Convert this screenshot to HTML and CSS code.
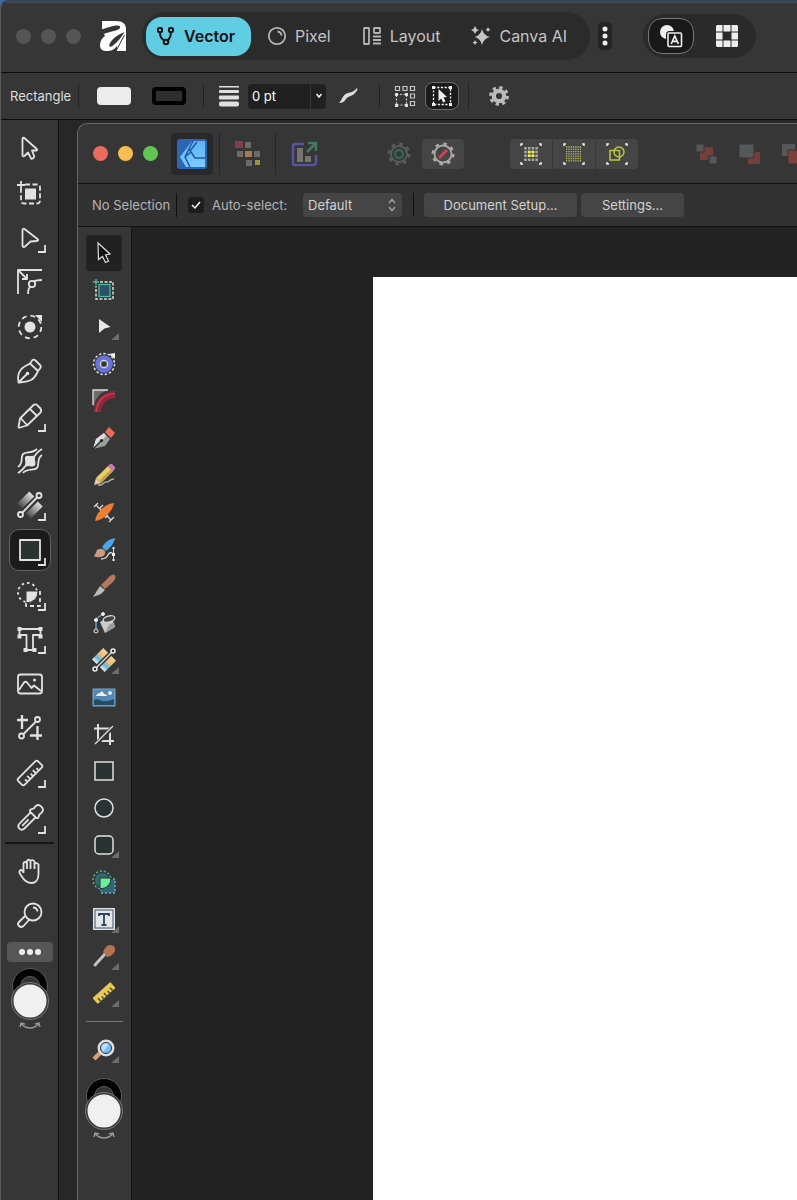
FILE: index.html
```
<!DOCTYPE html>
<html lang="en">
	<head>
		<meta charset="utf-8" />
		<meta name="viewport" content="width=device-width, initial-scale=1">
		<title>Vector</title>
		<link rel="stylesheet" href="styles.css">
	</head>
	<body>
		<div class="app">
			<!-- title bar -->
			<header class="titlebar">
				<div class="dots"><i></i><i></i><i></i></div>
				<svg class="logo" width="26" height="30" viewBox="0 0 26 30">
					<path fill="#fff" d="M2 0H16C23 0 26 3 26 8V30H17V25C14 29 11 30 7 30C2 30 0 28 0 24C0 20 2 17 5 15L2 9Z"/>
					<path fill="#363636" d="M1 8.500C7 7 13 4.500 17 4.500C21.500 4.500 21 7.500 17 9C12 11 5 11 0 16Z"/>
					<path fill="#363636" d="M24.500 11C17 14 12 18 9.500 23C8.500 26 10.500 26.500 13 24.500C18 20.500 21.500 16 24.500 11Z"/>
					<path fill="none" stroke="#363636" stroke-width="1" d="M24.500 14L16.500 29"/>
				</svg>
				<nav class="modes">
					<button class="mode current" type="button">
						<svg width="20" height="20" viewBox="0 0 20 20" fill="none" stroke="#111" stroke-width="2">
							<rect x="2" y="2" width="4" height="4" rx="1"/><rect x="13" y="2" width="4" height="4" rx="1"/><circle cx="10" cy="16" r="2.300"/><path d="M4 6C4 11 5 12 8 14.500M15 6C15 11 14 12 12 14.500"/>
						</svg>
						Vector
					</button>
					<button class="mode" type="button">
						<svg width="20" height="20" viewBox="0 0 20 20" fill="none" stroke="#b4b4b4" stroke-width="1.800">
							<circle cx="10" cy="10" r="8.200"/><path d="M10.500 5.500A4.500 4.500 0 0 1 14.500 9.500"/>
						</svg>
						Pixel
					</button>
					<button class="mode" type="button">
						<svg width="20" height="20" viewBox="0 0 20 20" fill="none" stroke="#b4b4b4" stroke-width="1.800">
							<rect x="2" y="2" width="5" height="16" rx="0.500"/><rect x="12" y="2" width="6" height="5" rx="0.500"/><path d="M11 10.500H19M11 14H19M11 17.500H19"/>
						</svg>
						Layout
					</button>
					<button class="mode" type="button">
						<svg width="20" height="20" viewBox="0 0 20 20" fill="#c4c4c4">
							<path d="M11 3Q12.500 9.500 19 11Q12.500 12.500 11 19Q9.500 12.500 3.500 11Q9.500 9.500 11 3ZM4 0Q4.800 3.200 8 4Q4.800 4.800 4 8Q3.200 4.800 0 4Q3.200 3.200 4 0ZM17 1Q17.500 3 19.500 3.500Q17.500 4 17 6Q16.500 4 14.500 3.500Q16.500 3 17 1ZM4 14Q4.500 16 6.500 16.500Q4.500 17 4 19Q3.500 17 1.500 16.500Q3.500 16 4 14Z"/>
						</svg>
						Canva AI
					</button>
				</nav>
				<button class="more-modes" type="button" aria-label="More">
					<svg width="6" height="22" viewBox="0 0 6 22" fill="#eee"><circle cx="3" cy="4" r="2.500"/><circle cx="3" cy="11" r="2.500"/><circle cx="3" cy="18" r="2.500"/></svg>
				</button>
				<div class="views">
					<button class="view current" type="button" aria-label="Assets">
						<svg width="24" height="24" viewBox="0 0 24 24">
							<circle cx="8" cy="8" r="7" fill="#eee"/><rect x="9" y="9" width="14" height="14" rx="1.500" fill="#1a1a1a" stroke="#1a1a1a" stroke-width="4"/><rect x="9" y="9" width="13.500" height="13.500" rx="1" fill="#1a1a1a" stroke="#eee" stroke-width="1.600"/><path d="M12.200 20L15.800 12L19.400 20M13.600 17.400H18" fill="none" stroke="#eee" stroke-width="1.700"/>
						</svg>
					</button>
					<button class="view" type="button" aria-label="Panels">
						<svg width="22" height="22" viewBox="0 0 22 22" fill="#eee"><path d="M1 0H6.500V6.500H0V1ZM7.500 0H14.500V6.500H7.500ZM15.500 0H21L22 1V6.500H15.500ZM0 7.500H6.500V14.500H0ZM15.500 7.500H22V14.500H15.500ZM0 15.500H6.500V22H1L0 21ZM7.500 15.500H14.500V22H7.500ZM15.500 15.500H22V21L21 22H15.500Z"/></svg>
					</button>
				</div>
			</header>

			<!-- context bar -->
			<div class="context">
				<span class="tool-name">Rectangle</span>
				<button class="fill-swatch" type="button" aria-label="Fill"></button>
				<button class="stroke-swatch" type="button" aria-label="Stroke"></button>
				<div class="stroke-box">
					<svg width="20" height="22" viewBox="0 0 20 22" fill="#e0e0e0"><rect y="1" width="20" height="1.500"/><rect y="5" width="20" height="3" rx="1"/><rect y="10.500" width="20" height="4" rx="1"/><rect y="16.500" width="20" height="5" rx="2"/></svg>
					<input type="text" value="0 pt" aria-label="Stroke width"><button class="caret" type="button" aria-label="Stroke widths"><svg width="8" height="6" viewBox="0 0 8 6" fill="none" stroke="#eee" stroke-width="1.600"><path d="M1.500 1L4 4L6.500 1"/></svg></button>
					<svg width="20" height="18" viewBox="0 0 20 18" fill="#ddd"><path d="M0 16C4 12 3 8 9 6C14 5 15 4 18 1C19 2 18 4 16 6C13 10 10 8 7 12C5 15 3 16 0 16Z"/></svg>
				</div>
				<div class="select-box">
					<button class="small" type="button" aria-label="Transform objects separately">
						<svg width="22" height="22" viewBox="0 0 22 22" fill="none" stroke="#c8c8c8" stroke-width="1.200">
							<path d="M1.500 1.500H5.500V5.500H1.500ZM9 1.500H13V5.500H9ZM16.500 1.500H20.500V5.500H16.500ZM16.500 9H20.500V13H16.500ZM16.500 16.500H20.500V20.500H16.500Z"/><path stroke-dasharray="2 1.500" d="M2.500 9.500H12.500V20H2.500Z"/><path fill="#ddd" stroke="none" d="M1 8H4V11H1ZM11 8H14V11H11ZM1 19H4V22H1ZM11 19H14V22H11Z"/>
						</svg>
					</button>
					<button class="small current" type="button" aria-label="Edit all layers">
						<svg width="20" height="20" viewBox="0 0 20 20">
							<rect x="1.500" y="1.500" width="17" height="17" fill="none" stroke="#eee" stroke-width="1.300" stroke-dasharray="2.200 1.500"/><path fill="#eee" d="M0 0H3V3H0ZM17 0H20V3H17ZM0 17H3V20H0ZM17 17H20V20H17ZM6.500 3L15 11L11.500 11.500L13.500 15.500L11 16.500L9.300 12.500L6.500 15Z"/>
						</svg>
					</button>
				</div>
				<button class="small" type="button" aria-label="Options">
					<svg width="20" height="20" viewBox="0 0 20 20"><circle cx="10" cy="10" r="8.300" fill="none" stroke="#bababa" stroke-width="3.200" stroke-dasharray="3.260 3.260"/><circle cx="10" cy="10" r="5.200" fill="none" stroke="#bababa" stroke-width="4.200"/></svg>
				</button>
			</div>

			<div class="workspace">
				<!-- tools of the back window -->
				<aside class="tools">
					<div class="tool-list">
						<button type="button" aria-label="Move"><svg class="line" viewBox="0 0 32 32"><path d="M10 5.800L22.800 17Q24 18.500 22 18.500H18L20.300 24.500Q19.500 27 17.300 26.800L14 20.500L10.500 24Q8.500 25 8.500 23V7Q8.700 5 10 5.800Z"/></svg></button>
						<button type="button" aria-label="Artboard"><svg class="line" viewBox="0 0 32 32"><path stroke-dasharray="5 2.500" d="M11 7.500H23Q26 7.500 26 10.500V23.500Q26 26.500 23 26.500H10Q7 26.500 7 23.500V12"/><rect class="solid" x="11" y="11.500" width="11" height="11"/><path d="M7 4V12M3 8H11"/></svg></button>
						<button type="button" aria-label="Node"><svg class="line" viewBox="0 0 32 32"><path d="M10.500 7L23.500 17Q25 18.500 23 19L16.500 19.500L11 24.500Q9 26 8.500 23.500V8Q9 6 10.500 7Z"/><path class="corner" d="M31 23V30H24"/></svg></button>
						<button type="button" aria-label="Corner"><svg class="line" viewBox="0 0 32 32"><path d="M28 4H4V28M5 5L13 13M13 8V13H8M14 28C14 24 14.500 22 16.500 20.500M20 15.500C22 14 24 14 28 14"/><circle cx="18" cy="18" r="3.200"/></svg></button>
						<button type="button" aria-label="Point transform"><svg class="line" viewBox="0 0 32 32"><circle class="solid" cx="16" cy="16" r="5.500"/><circle cx="16" cy="16" r="11.300" stroke-dasharray="5 3.880"/><path class="solid" d="M21 4H28V11Z"/></svg></button>
						<button type="button" aria-label="Pen"><svg class="line" viewBox="0 0 32 32"><path d="M4.500 27.500C3.500 22 4 19 6 16C8 12 12 11 16 8.500L24 16C22 20 21 23 17 25C13 27 9 27 4.500 27.500ZM16 8.500L18.500 5Q20 4 21.500 5.500L26.500 10.500Q27.500 12 26 13.500L24 16M4.500 27.500L13 19"/><circle class="solid" cx="13.500" cy="18.500" r="1.800"/></svg></button>
						<button type="button" aria-label="Pencil"><svg class="line" viewBox="0 0 32 32"><path d="M4.500 27L6 18.500L19.500 5Q21.500 3.500 23.500 5.500L26.500 8.500Q28 10.500 26.500 12.500L13 25.500L6 27.500Q4.500 28 4.500 27ZM6.500 18L13 25M16 9L22.500 15.500"/><path class="corner" d="M31 24V31H24"/></svg></button>
						<button type="button" aria-label="Warp"><svg class="line" viewBox="0 0 32 32"><path class="solid" d="M11 12Q13 10 16 11Q20 11 22 9.500Q20 14 21.500 17Q22 20 20 21Q18 22 15 21Q12 21 10 23Q12 18 11 15Z"/><path d="M4 28C8 25 10 24 11 21M21 11C22 8 25 6 28 4M4 22C10 18 6 13 9 9C12 6 18 9 23 4M9 28C13 23 20 26 23 23C26 19 22 14 28 10"/></svg></button>
						<button type="button" aria-label="Gradient"><svg class="line" viewBox="0 0 32 32"><defs><linearGradient id="fade"><stop stop-color="#eee" stop-opacity=".1"/><stop offset="1" stop-color="#ddd"/></linearGradient></defs><g transform="rotate(-45 16 16)" stroke="none" fill="url(#fade)"><rect x="8" y="6" width="17" height="7"/><rect x="7" y="19" width="17" height="7"/></g><path d="M8.500 23.500L23 8.500"/><circle cx="6.500" cy="25.500" r="2.500"/><circle cx="25" cy="6.500" r="2.500"/><path class="corner" d="M31 24V31H24"/></svg></button>
						<button class="current" type="button" aria-label="Rectangle"><svg class="line" viewBox="0 0 32 32"><rect x="6" y="6" width="20" height="20" fill="#2a3232"/><path class="corner" d="M31 24V31H24"/></svg></button>
						<button type="button" aria-label="Shape builder"><svg class="line" viewBox="0 0 32 32"><circle cx="13.500" cy="13.500" r="9.500" stroke-dasharray="2.500 3"/><path d="M26 12V27H12V23" stroke-dasharray="4 3"/><path class="knock" d="M12 12H24Q24 23 12 24Z"/><path class="corner" d="M31 24V31H24"/></svg></button>
						<button type="button" aria-label="Text"><svg class="line" viewBox="0 0 32 32"><path d="M5.500 6H26.500V12H19V27H12.500V12H5.500Z"/><path class="solid" d="M3.500 4H7.500V8H3.500ZM24.500 4H28.500V8H24.500ZM3.500 11.500H7.500V15.500H3.500ZM24.500 11.500H28.500V15.500H24.500ZM9.500 25H13.500V29H9.500ZM18.500 25H22.500V29H18.500Z"/><path class="corner" d="M31 23V30H24"/></svg></button>
						<button type="button" aria-label="Place image"><svg class="line" viewBox="0 0 32 32"><rect x="4" y="6.500" width="24" height="19" rx="2.500"/><path d="M5 22L10 14.500Q11.500 13 13 14.500L17.500 20L20 17.500L27 23"/><circle class="solid" cx="20.500" cy="12" r="1.500"/></svg></button>
						<button type="button" aria-label="Vector crop"><svg class="line" viewBox="0 0 32 32"><path stroke-width="2.300" d="M8 3V17M3 8H14M23.500 14V28M16 23.500H28"/><path d="M9.500 22L21.500 10"/><circle cx="7.500" cy="24" r="2.500"/><circle cx="23.500" cy="7.500" r="2.500"/></svg></button>
						<button type="button" aria-label="Measure"><svg class="line" viewBox="0 0 32 32"><g transform="rotate(-45 16 16)"><rect x="2" y="11.500" width="28" height="9" rx="2"/><path d="M8 20V17M12 20V16M16 20V17M20 20V16M24 20V17"/></g><path class="corner" d="M31 23V30H24"/></svg></button>
						<button type="button" aria-label="Color picker"><svg class="line" viewBox="0 0 32 32"><g transform="rotate(45 16 16)"><path d="M11.500 11.500H20.500Q22.500 10.500 21 8.500Q19.500 7 20.500 4Q20.500 0 16 0Q11.500 0 11.500 4Q12.500 7 11 8.500Q9.500 10.500 11.500 11.500ZM12.500 12V27Q12.500 31 16 31Q19.500 31 19.500 27V12M16 18V27"/></g><path class="corner" d="M31 24V31H24"/></svg></button>
					</div>
					<div class="tool-list views-list">
						<button type="button" aria-label="Pan"><svg class="line" viewBox="0 0 32 32"><path d="M9.500 18V8Q11 6 13 8V14M13 14V6Q14.500 3.500 16.500 6V14M16.500 14V6Q18.500 4 20.500 6.500V14M20.500 14V9Q22.500 7 24.500 9.500V19C24.500 24 22 28 17.500 28C11 28 9 23 5.500 18Q5 15 7.500 15Q9 15.500 9.500 18"/></svg></button>
						<button type="button" aria-label="Zoom"><svg class="line" viewBox="0 0 32 32"><circle cx="19" cy="13" r="8.500"/><path d="M19 8.500Q23 8.500 23.500 12.500M11 17L5 23Q3 25 5 27Q7 29 9.500 27L15 21"/></svg></button>
					</div>
					<button class="more" type="button" aria-label="More tools"><i></i><i></i><i></i></button>
					<svg class="colors" width="40" height="64" viewBox="0 0 40 64"><circle cx="20" cy="19" r="17.500" fill="#000" stroke="#5c5c5c"/><circle cx="20" cy="19" r="9.500" fill="#333" stroke="#5c5c5c"/><circle cx="20" cy="34" r="17.500" fill="#f0f0f0" stroke="#3a3a3a" stroke-width="2"/><circle cx="20" cy="34" r="18.500" fill="none" stroke="#777"/><path d="M11 57Q20 65 29 57M10 60L11 56L15 57M25 57L29 56L30 60" fill="none" stroke="#999" stroke-width="1.300"/></svg>
				</aside>

				<!-- front window -->
				<section class="window">
					<div class="toolbar">
						<div class="dots color"><i></i><i></i><i></i></div>
						<div class="personas">
							<button class="persona current" type="button" aria-label="Designer"><svg width="30" height="30" viewBox="0 0 30 30"><defs><linearGradient id="sky" x2="0" y2="1"><stop stop-color="#5cb4f4"/><stop offset="1" stop-color="#7ccbff"/></linearGradient></defs><rect width="30" height="30" rx="3" fill="#2c65b5"/><path fill="url(#sky)" d="M15 2H28V28H9L3 18Z"/><path d="M16 2L8 18L13 28M12 10L18 19H28M20 3L13 12M8 18L14 13" fill="none" stroke="#2259a0" stroke-width="1.500"/></svg></button>
							<button class="persona" type="button" aria-label="Pixel persona"><svg width="26" height="26" viewBox="0 0 26 26"><path fill="#6b6b6b" d="M10 1H16V7H10ZM2 10H8V16H2ZM19 10H25V16H19ZM11 19H17V25H11Z"/><path fill="#833f49" d="M0 0H8V7H0Z"/><path fill="#a9774c" d="M10 10H17V16H10Z"/><path fill="#9a9143" d="M20 19H25V24H20Z"/></svg></button>
							<button class="persona" type="button" aria-label="Export persona"><svg width="28" height="28" viewBox="0 0 28 28" fill="none"><path d="M14 4H5Q3 4 3 6V23Q3 25 5 25H23Q26 25 26 22V15" stroke="#55559a" stroke-width="2.500"/><path fill="#777370" d="M7 8H13V22H7ZM15 16H21V22H15Z"/><path d="M17 12L25 4M18 3H26V11" stroke="#3f7b62" stroke-width="2.500"/></svg></button>
						</div>
						<button class="gear" type="button" aria-label="Defaults"><svg width="24" height="24" viewBox="0 0 24 24" fill="none"><circle cx="12" cy="12" r="8" stroke="#595c5b" stroke-width="2"/><circle cx="12" cy="12" r="10" stroke="#595c5b" stroke-width="3" stroke-dasharray="3.500 4.350"/><circle cx="12" cy="12" r="4" stroke="#376451" stroke-width="2.500"/></svg></button>
						<button class="gear raised" type="button" aria-label="Revert defaults"><svg width="24" height="24" viewBox="0 0 24 24" fill="none"><circle cx="12" cy="12" r="8.500" stroke="#aaa" stroke-width="1.800"/><circle cx="12" cy="12" r="10.300" stroke="#aaa" stroke-width="2.500" stroke-dasharray="3.500 4.590"/><path d="M8 16L16 8" stroke="#d44050" stroke-width="3"/></svg></button>
						<div class="snaps">
							<button type="button" aria-label="Force pixel alignment"><svg width="24" height="24" viewBox="0 0 24 24" fill="none"><path d="M2 4V2H4M20 2H22V4M22 20V22H20M4 22H2V20" stroke="#eee" stroke-width="1.500"/><path d="M6.500 5V19M10.200 5V19M13.900 5V19M17.600 5V19" stroke="#aaa" stroke-width="2.500" stroke-dasharray="2.500 1.300"/><path d="M10.200 8.800V15M13.900 8.800V15" stroke="#f4f43a" stroke-width="2.800" stroke-dasharray="2.500 1.300"/></svg></button>
							<button type="button" aria-label="Move by whole pixels"><svg width="24" height="24" viewBox="0 0 24 24" fill="none"><path d="M2 4V2H4M20 2H22V4M22 20V22H20M4 22H2V20" stroke="#eee" stroke-width="1.500"/><path d="M4 5H20M4 7.300H20M4 9.600H20M4 11.900H20M4 14.200H20M4 16.500H20M4 18.800H20" stroke="#b9bd5c" stroke-width="1.300" stroke-dasharray="1.300 1"/></svg></button>
							<button type="button" aria-label="Snapping"><svg width="24" height="24" viewBox="0 0 24 24" fill="none"><path d="M2 4V2H4M20 2H22V4M22 20V22H20M4 22H2V20" stroke="#eee" stroke-width="1.500"/><path d="M5 8.500H14.500V18H5Z" stroke="#b9c83a" stroke-width="1.500"/><circle cx="14" cy="10" r="5" stroke="#b9c83a" stroke-width="1.500"/></svg></button>
						</div>
						<div class="orders">
							<button type="button" aria-label="Back"><svg width="22" height="22" viewBox="0 0 22 22"><path fill="#743f3b" d="M8 4H17V13H8Z"/><path fill="#743f3b" d="M4 9H12V17H4Z"/><path fill="#555858" stroke="#363636" d="M0 1H8V9H0ZM13 13H21V21H13Z"/></svg></button>
							<button type="button" aria-label="Backward"><svg width="22" height="22" viewBox="0 0 22 22"><path fill="#743f3b" d="M9 9H21V21H9Z"/><path fill="#555858" stroke="#363636" d="M0 1H15V15H0Z"/></svg></button>
							<button type="button" aria-label="Forward"><svg width="22" height="22" viewBox="0 0 22 22"><path fill="#555858" d="M0 1H13V13H0Z"/><path fill="#7c3f3a" stroke="#363636" d="M6 7H21V21H6Z"/></svg></button>
						</div>
					</div>

					<div class="options">
						<span class="selection">No Selection</span>
						<label class="auto"><input type="checkbox" checked> Auto-select:</label>
						<span class="pick">
							<select aria-label="Auto-select mode"><option>Default</option></select>
							<svg width="8" height="14" viewBox="0 0 8 14" fill="none" stroke="#aaa" stroke-width="1.200"><path d="M1 5L4 1.500L7 5M1 9L4 12.500L7 9"/></svg>
						</span>
						<span class="setups">
							<button class="setup" type="button">Document Setup...</button>
							<button class="settings" type="button">Settings...</button>
						</span>
					</div>

					<div class="document">
						<aside class="tools-color">
							<button class="current" type="button" aria-label="Move"><svg viewBox="0 0 32 32"><path d="M10 6L22 17L17.500 18L20.500 24L17.500 25.500L14.500 19.500L10.500 22.500Z" fill="#111" stroke="#ddd" stroke-width="1.200"/></svg></button>
							<button type="button" aria-label="Artboard"><svg viewBox="0 0 32 32"><path d="M12 8H25V25H8V12" fill="none" stroke="#ddd" stroke-width="1.500" stroke-dasharray="3 1.500"/><rect x="11" y="10.500" width="11" height="12" fill="#2b5166" stroke="#4bc0a0" stroke-width="1.200"/><path d="M8 5V11M5 8H11" stroke="#4bc0a0" stroke-width="1.300"/></svg></button>
							<button type="button" aria-label="Node"><svg viewBox="0 0 32 32"><path fill="#e8e8e8" d="M11 8L22.500 16L16.500 17.500L11 22Z"/><path class="more-mark" d="M31 22V29H23Z"/></svg></button>
							<button type="button" aria-label="Point transform"><svg viewBox="0 0 32 32" fill="none"><circle cx="16" cy="16" r="10.500" stroke="#ddd" stroke-width="1.500" stroke-dasharray="2.500 1.900"/><circle cx="16" cy="16" r="6.300" stroke="#6673dd" stroke-width="5"/><circle cx="16" cy="16" r="3.700" fill="#555" stroke="#ddd" stroke-width="1.200"/><circle cx="16" cy="16" r="2" fill="#333"/><path fill="#eee" d="M21 6L27 5V11Z"/></svg></button>
							<button type="button" aria-label="Corner"><svg viewBox="0 0 32 32"><path fill="#6a6f6e" d="M5 5H20Q8 9 6 21H5Z"/><path d="M5 20V5H20" fill="none" stroke="#ddd" stroke-width="1.300"/><path fill="#96263a" d="M6 27Q7 8 27 6V13Q14 14 13 27Z"/><path d="M8 27Q10 10 27 8.500" fill="none" stroke="#c94a55" stroke-width="1.200"/></svg></button>
							<button type="button" aria-label="Pen"><svg viewBox="0 0 32 32"><path fill="#9b9d9d" d="M5 27L8 17L16 11L22 17L17 24Z"/><path fill="#ddd" d="M5 27L8 17L16 11L18 14L10 22Z"/><path d="M5 27L13 19" stroke="#222" stroke-width="1.200"/><circle cx="13.500" cy="18.500" r="1.600" fill="#222"/><path fill="#f06a5c" d="M17 10L21 5L27 11L23 16Z"/></svg></button>
							<button type="button" aria-label="Pencil"><svg viewBox="0 0 32 32"><path fill="#e8d068" d="M8 19L20 7L25 12L13 24Z"/><path fill="#c6a443" d="M11 22L23 10L25 12L13 24Z"/><path fill="#e8c9a0" d="M6 26L8 19L13 24Z"/><path fill="#c779bd" d="M20 7L22 5L24 5L27 8V10L25 12Z"/><path d="M10 26C15 27 15 23 18 23C21 24 21 20 26 20" fill="none" stroke="#aaa" stroke-width="1.500"/></svg></button>
							<button type="button" aria-label="Stroke width"><svg viewBox="0 0 32 32"><path fill="#ed7e32" d="M7 25C8 17 16 8 26 7C25 15 16 24 7 25Z"/><path d="M6 11L10 7M8 9L13 14M12 12L15 9M19 20L23 24M21 26L26 21M17 22L20 19" stroke="#ddd" stroke-width="1.200"/></svg></button>
							<button type="button" aria-label="Brush"><svg viewBox="0 0 32 32"><path fill="#4aa6e8" d="M14 14Q19 6 27 5Q26 12 18 18Z"/><path fill="#c89a80" d="M6 23Q8 20 9 17Q14 14 17 18Q18 23 13 24Q9 25 6 23Z"/><path d="M13 26Q18 26 20 22T25 21" fill="none" stroke="#ddd" stroke-width="1.300"/><path d="M25.500 15V27" stroke="#ddd"/><path fill="#eee" d="M24.500 14H26.500V16H24.500ZM24 20H27V23H24ZM24.500 26H26.500V28H24.500Z"/></svg></button>
							<button type="button" aria-label="Knife"><svg viewBox="0 0 32 32"><path fill="#b6775a" d="M13 15L22 6Q26 3 27.500 6Q28 9 25 12L17 19Z"/><path fill="#b8bbbb" d="M5 27L12 16L17 20L13 24Z"/></svg></button>
							<button type="button" aria-label="Fill"><svg viewBox="0 0 32 32"><path d="M8 24V12L15 7" fill="none" stroke="#6a97c8" stroke-width="1.500"/><path fill="#c8cbcb" d="M12 15L23 9L27 20L17 26Z"/><path fill="#9a9c9c" d="M21 18L26 15L27 20L17 26Z"/><ellipse cx="21" cy="12" rx="6" ry="3" fill="#444" stroke="#ddd" stroke-width="1.200" transform="rotate(-15 21 12)"/><g fill="#333" stroke="#eee"><circle cx="8" cy="24" r="2"/><circle cx="8" cy="13" r="1.500" fill="#eee"/><circle cx="15" cy="7" r="1.500" fill="#eee"/></g></svg></button>
							<button type="button" aria-label="Gradient"><svg viewBox="0 0 32 32"><defs><linearGradient id="rainbow"><stop stop-color="#f0f0f0"/><stop offset=".3" stop-color="#5eb8e0"/><stop offset=".6" stop-color="#f0bd77"/><stop offset="1" stop-color="#ead39c"/></linearGradient></defs><g transform="rotate(-45 16 16)" fill="url(#rainbow)"><rect x="8" y="7" width="16" height="7"/><rect x="8" y="18" width="16" height="7"/></g><path d="M8 24L24 8" stroke="#333" stroke-width="4"/><path d="M8 24L24 8" stroke="#ddd" stroke-width="1.500"/><g fill="#333" stroke="#eee" stroke-width="1.500"><circle cx="7" cy="25" r="2"/><circle cx="25" cy="7" r="2"/></g><path class="more-mark" d="M31 23V30H23Z"/></svg></button>
							<button type="button" aria-label="Place image"><svg viewBox="0 0 32 32"><rect x="5" y="8" width="22" height="17" fill="#5288b3" stroke="#79a8cb"/><path fill="#eee" d="M8 15Q9 12 12 12Q14 8 16 13Q19 13 19 15Z"/><circle cx="22" cy="12" r="2" fill="#e5e5e5"/><path fill="#234c65" d="M6 19Q10 17 14 20Q20 21 26 18V24H6Z"/></svg></button>
							<button type="button" aria-label="Vector crop"><svg viewBox="0 0 32 32" fill="none" stroke="#e0e0e0"><path stroke-width="2" d="M10 6V23H26M6 10.500H22V27"/><path stroke="#363636" stroke-width="4" d="M9 25L24 10"/><path stroke-width="1.200" d="M7 26L25 8"/></svg></button>
							<button type="button" aria-label="Rectangle"><svg viewBox="0 0 32 32"><rect class="shape" x="7" y="7" width="18" height="18"/></svg></button>
							<button type="button" aria-label="Ellipse"><svg viewBox="0 0 32 32"><circle class="shape" cx="16" cy="16" r="9"/></svg></button>
							<button type="button" aria-label="Rounded rectangle"><svg viewBox="0 0 32 32"><rect class="shape" x="7" y="7" width="18" height="18" rx="4"/><path class="more-mark" d="M31 22V29H23Z"/></svg></button>
							<button type="button" aria-label="Shape builder"><svg viewBox="0 0 32 32"><circle cx="14" cy="14" r="7" fill="#2d6b70"/><circle cx="14" cy="14" r="9" fill="none" stroke="#63aeb5" stroke-width="1.500" stroke-dasharray="2 2"/><path d="M25 13H27V27H13V24" fill="#326771" stroke="#7ba5cb" stroke-width="1.500" stroke-dasharray="2 2"/><path fill="#6cf095" stroke="#2d3333" d="M12 12H23Q23 22 12 23Z"/></svg></button>
							<button type="button" aria-label="Text"><svg viewBox="0 0 32 32"><rect x="5" y="5" width="22" height="22" rx="1" fill="#e3e7ea"/><rect x="7" y="7" width="18" height="18" fill="none" stroke="#3b5468"/><path d="M11 13V11H21V13M16 11V22M13.500 22H18.500" fill="none" stroke="#28475e" stroke-width="1.800"/><path class="more-mark" d="M31 23V30H23Z"/></svg></button>
							<button type="button" aria-label="Color picker"><svg viewBox="0 0 32 32"><path d="M7 25L17 14" stroke="#bfc3c3" stroke-width="3" stroke-linecap="round"/><path fill="#b97250" d="M15 12Q18 5 22 5Q28 5 27 11Q25 16 19 17Z"/><path class="more-mark" d="M31 23V30H23Z"/></svg></button>
							<button type="button" aria-label="Measure"><svg viewBox="0 0 32 32"><g transform="rotate(-42 16 16)"><rect x="4" y="12" width="24" height="8" rx="1" fill="#e6c956"/><path d="M8 20V16M12 20V17M16 20V16M20 20V17M24 20V16" stroke="#5a4b1c" stroke-width="1.500"/></g><path class="more-mark" d="M31 23V30H23Z"/></svg></button>
							<hr>
							<button type="button" aria-label="Zoom"><svg viewBox="0 0 32 32"><path d="M6 25L12 19" stroke="#d0a17a" stroke-width="4.500"/><circle cx="18" cy="14" r="7" fill="#6ec1f6" stroke="#ddd" stroke-width="3"/><path d="M13 14A5 5 0 0 1 21 10L15 18Z" fill="#b7e2ff"/><circle cx="18" cy="14" r="5.500" fill="none" stroke="#334"/><path class="more-mark" d="M31 22V29H23Z"/></svg></button>
							<svg class="colors" width="40" height="64" viewBox="0 0 40 64"><circle cx="20" cy="19" r="17.500" fill="#000" stroke="#5c5c5c"/><circle cx="20" cy="19" r="9.500" fill="#333" stroke="#5c5c5c"/><circle cx="20" cy="34" r="17.500" fill="#f0f0f0" stroke="#3a3a3a" stroke-width="2"/><circle cx="20" cy="34" r="18.500" fill="none" stroke="#777"/><path d="M11 57Q20 65 29 57M10 60L11 56L15 57M25 57L29 56L30 60" fill="none" stroke="#999" stroke-width="1.300"/></svg>
						</aside>
						<main class="canvas">
							<div class="artboard"></div>
						</main>
					</div>
				</section>
			</div>
		</div>
	</body>
</html>
```

FILE: styles.css
```
*{
	box-sizing: border-box;
}

body{
	margin: 0;
	height: 100vh;
	overflow: hidden;
	background: #3f6a9b;
	color: #dedede;
	font-family: Inter, "Liberation Sans", sans-serif;
	font-size: 13px;
}

button,input,select{
	margin: 0;
	padding: 0;
	border: 0;
	background: none;
	color: inherit;
	font: inherit;
}

svg{
	display: block;
	flex: none;
}

.app{
	display: flex;
	flex-direction: column;
	height: 100%;
	border-top: 2px solid #34435c;
	border-left: 1px solid #5a5a5a;
	border-top-left-radius: 8px;
	background: #363636;
	overflow: hidden;
}

/* title bar */
.titlebar{
	display: flex;
	flex: none;
	align-items: center;
	height: 71px;
	padding: 0 0 3px 15px;
	border-top: 1px solid #4a4d50;
	border-bottom: 1px solid #0c0c0c;
}

.dots{
	display: flex;
	flex: none;
	gap: 10px;
}

.dots i{
	width: 15px;
	height: 15px;
	border-radius: 50%;
	background: #555;
}

.dots.color i:nth-child(1){
	background: #ec6a5e;
}

.dots.color i:nth-child(2){
	background: #f5be4f;
}

.dots.color i:nth-child(3){
	background: #61c554;
}

.logo{
	margin-left: 19px;
}

.modes{
	display: flex;
	flex: none;
	align-items: center;
	gap: 1px;
	width: 448px;
	height: 48px;
	margin-left: 16px;
	padding-left: 4px;
	border-radius: 24px;
	background: #2b2b2b;
}

.mode{
	display: flex;
	align-items: center;
	gap: 8px;
	height: 39px;
	padding: 0 15px;
	border-radius: 16px;
	color: #c4c4c4;
	font-size: 16px;
	white-space: nowrap;
}

.mode.current{
	width: 105px;
	padding: 0 10px;
	background: #60cde3;
	color: #101010;
	font-weight: 600;
}

.more-modes{
	width: 14px;
	height: 28px;
	margin-left: 8px;
	padding: 0 4px;
	border-radius: 5px;
	background: #242424;
}

.views{
	display: flex;
	flex: none;
	align-items: center;
	gap: 10px;
	width: 113px;
	height: 44px;
	margin-left: 31px;
	padding: 0 5px;
	border-radius: 22px;
	background: #2a2a2a;
}

.view{
	display: flex;
	align-items: center;
	justify-content: center;
	width: 46px;
	height: 36px;
	border-radius: 14px;
}

.view.current{
	border: 1px solid #777;
	background: #191919;
}

/* context bar */
.context{
	display: flex;
	flex: none;
	align-items: center;
	height: 47px;
	padding-left: 9px;
	border-bottom: 1px solid #0c0c0c;
}

.tool-name{
	width: 69px;
	padding: 4px 0;
	border-right: 1px solid #252525;
	white-space: nowrap;
}

.fill-swatch{
	width: 34px;
	height: 18px;
	margin-left: 18px;
	border-radius: 4px;
	background: #ececec;
}

.stroke-swatch{
	width: 34px;
	height: 18px;
	margin-left: 21px;
	border: 4px solid #000;
	border-radius: 4px;
	background: #2e2e2e;
}

.stroke-box{
	display: flex;
	align-items: center;
	height: 24px;
	margin-left: 17px;
	padding: 0 20px 0 15px;
	border-left: 1px solid #222;
	border-right: 1px solid #222;
}

.stroke-box input{
	width: 62px;
	height: 25px;
	margin-left: 9px;
	padding-left: 4px;
	border-radius: 4px 0 0 4px;
	background: #202020;
	color: #fff;
}

.caret{
	display: flex;
	align-items: center;
	justify-content: center;
	width: 15px;
	height: 25px;
	margin: 0 13px 0 1px;
	border-radius: 0 4px 4px 0;
	background: #202020;
}

.select-box{
	display: flex;
	align-items: center;
	gap: 3px;
	margin-right: 13px;
	padding: 0 9px 0 8px;
	border-right: 1px solid #252525;
}

.small{
	display: flex;
	align-items: center;
	justify-content: center;
	width: 34px;
	height: 28px;
	border-radius: 8px;
}

.small.current{
	border: 1px solid #6a6a6a;
	background: #1a1a1a;
}

/* line tools */
.workspace{
	display: flex;
	flex: 1;
	min-height: 0;
	background: #272727;
}

.tools{
	flex: none;
	width: 58px;
	padding: 6px 4px 0;
	border-right: 1px solid #141414;
	background: #363636;
}

.tool-list{
	display: grid;
	grid-auto-rows: 1fr;
	justify-items: center;
	height: 718px;
	padding-bottom: 2px;
	border-bottom: 2px solid #161616;
}

.views-list{
	height: 90px;
	margin-top: 5px;
	border: 0;
}

.tool-list button,.tools-color button{
	display: flex;
	align-items: center;
	justify-content: center;
}

.tool-list button{
	width: 42px;
	height: 42px;
	border-radius: 10px;
	align-self: center;
}

.tool-list .current{
	border: 1px solid #626262;
	background: #1b1b1b;
}

.tool-list svg,.tools-color button svg{
	width: 32px;
	height: 32px;
}

.line{
	fill: none;
	stroke: #e2e2e2;
	stroke-width: 1.800;
	stroke-linejoin: round;
}

.line .solid{
	fill: #e2e2e2;
	stroke: none;
}

.line .knock{
	fill: #e2e2e2;
	stroke: #363636;
	stroke-width: 1;
}

.line .corner{
	stroke-linejoin: miter;
}

.more{
	display: flex;
	align-items: center;
	justify-content: center;
	gap: 2px;
	width: 46px;
	height: 20px;
	margin: 3px auto 5px;
	border-radius: 4px;
	background: #565656;
}

.more i{
	width: 6px;
	height: 6px;
	border-radius: 50%;
	background: #eee;
}

.colors{
	margin: 0 auto;
}

/* front window */
.window{
	display: flex;
	flex: 1;
	flex-direction: column;
	min-width: 0;
	margin: 3px 0 0 18px;
	border-top: 1px solid #666;
	border-left: 1px solid #666;
	border-top-left-radius: 10px;
	background: #363636;
	overflow: hidden;
}

.toolbar{
	display: flex;
	flex: none;
	align-items: center;
	height: 60px;
	padding-left: 15px;
	border-bottom: 1px solid #111;
}

.toolbar button,.toolbar .personas{
	display: flex;
	flex: none;
	align-items: center;
	justify-content: center;
}

.personas{
	margin-left: 13px;
}

.toolbar .persona{
	width: 56px;
	height: 42px;
	border-left: 1px solid #252525;
}

.toolbar .persona.current{
	width: 42px;
	margin-right: 6px;
	border: 0;
	border-radius: 4px;
	background: #292929;
}

.toolbar .gear{
	width: 42px;
	height: 30px;
	border-radius: 4px;
}

.personas + .gear{
	margin-left: 47px;
}

.toolbar .raised{
	margin-left: 2px;
	background: #454545;
}

.snaps{
	display: flex;
	flex: none;
	gap: 1px;
	margin-left: 46px;
	border-radius: 4px;
	overflow: hidden;
}

.snaps button{
	width: 42px;
	height: 30px;
	background: #454545;
}

.orders{
	display: flex;
	flex: none;
	gap: 21px;
	margin-left: 58px;
}

.options{
	display: flex;
	flex: none;
	align-items: center;
	height: 43px;
	padding-left: 14px;
	border-bottom: 1px solid #111;
	background: #323232;
	color: #d2d2d2;
	white-space: nowrap;
}

.selection{
	flex: none;
	width: 85px;
	padding: 4px 0;
	border-right: 1px solid #111;
	color: #b4b4b4;
}

.auto{
	display: flex;
	flex: none;
	align-items: center;
	gap: 8px;
	width: 126px;
	padding-left: 11px;
	color: #b4b4b4;
}

.auto input{
	appearance: none;
	width: 16px;
	height: 16px;
	border-radius: 3px;
	background: #1d1d1d url("data:image/svg+xml,%3Csvg xmlns='http://www.w3.org/2000/svg' viewBox='0 0 16 16'%3E%3Cpath d='M4 8l3 3 5-6' fill='none' stroke='%23fff' stroke-width='1.500'/%3E%3C/svg%3E");
}

.pick{
	display: flex;
	flex: none;
	align-items: center;
	width: 99px;
	height: 24px;
	padding-right: 6px;
	border-radius: 4px;
	background: #454545;
}

.pick select{
	appearance: none;
	flex: 1;
	height: 24px;
	padding-left: 5px;
}

.setups{
	display: flex;
	flex: none;
	align-items: center;
	gap: 4px;
	margin-left: 11px;
	padding-left: 10px;
	border-left: 1px solid #111;
}

.setup,.settings{
	height: 24px;
	border-radius: 4px;
	background: #454545;
}

.setup{
	width: 153px;
}

.settings{
	width: 103px;
}

.document{
	display: flex;
	flex: 1;
	min-height: 0;
}

.tools-color{
	flex: none;
	width: 54px;
	padding: 8px 8px 0;
	border-right: 1px solid #161616;
}

.tools-color button{
	width: 36px;
	height: 36px;
	margin-bottom: 1px;
	border-radius: 4px;
}

.tools-color .current{
	background: #212121;
}

.tools-color hr{
	height: 1px;
	margin: 10px 0;
	border: 0;
	background: #777;
}

.tools-color .colors{
	margin: 9px -2px 0;
}

.more-mark{
	fill: #6c6c6c;
}

.shape{
	fill: #2a3232;
	stroke: #e0e0e0;
	stroke-width: 1.500;
}

.canvas{
	flex: 1;
	min-width: 0;
	padding: 50px 0 0 241px;
	background: #222;
}

.artboard{
	height: 100%;
	background: #fff;
}
```
